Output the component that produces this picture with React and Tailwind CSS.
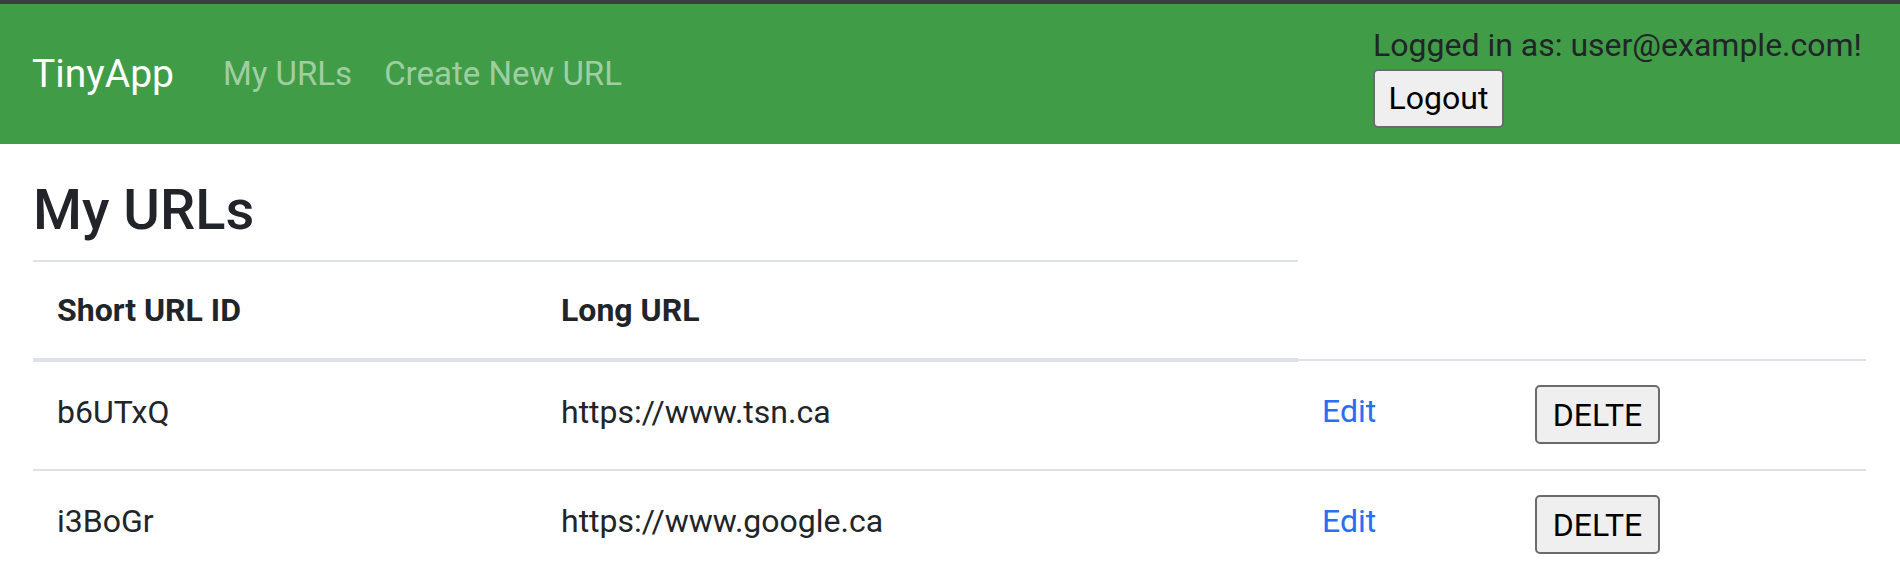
const urls = [
  { id: 'b6UTxQ', long: 'https://www.tsn.ca' },
  { id: 'i3BoGr', long: 'https://www.google.ca' },
];

function Header() {
  return (
    <nav className="bg-[#409c46] h-[140px] px-[32px] flex items-center justify-between">
      <div className="flex items-center">
        <span className="text-[39px] leading-[60px] text-white mr-[33px]">TinyApp</span>
        <a className="text-[33px] leading-[48px] text-[#a0cea3] px-[16px]">My URLs</a>
        <a className="text-[33px] leading-[48px] text-[#a0cea3] px-[16px]">Create New URL</a>
      </div>
      <div className="w-[495px] flex flex-col items-start">
        <span className="text-[32px] leading-[48px] text-[#212529]">Logged in as: user@example.com!</span>
        <button className="h-[59px] w-[131px] bg-[#efefef] border-2 border-[#6b6b6b] rounded-[5px] text-[32px] text-black">
          Logout
        </button>
      </div>
    </nav>
  );
}

export default function App() {
  return (
    <div className="min-h-[574px] bg-white font-['Roboto',sans-serif] text-[#212529]">
      <div className="h-[4px] bg-[#3a3d41]" />
      <Header />
      <main className="px-[33px]">
        <h1 className="text-[56px] font-medium leading-[67px] mt-[33px] mb-[16px]">My URLs</h1>
        <table className="w-[1833px] border-collapse text-[32px] leading-[48px]">
          <thead>
            <tr>
              <th className="w-[504px] text-left font-bold px-[24px] py-[24px] border-t-2 border-b-4 border-[#dee2e6]">
                Short URL ID
              </th>
              <th className="w-[761px] text-left font-bold px-[24px] py-[24px] border-t-2 border-b-4 border-[#dee2e6]">
                Long URL
              </th>
            </tr>
          </thead>
          <tbody>
            {urls.map((u) => (
              <tr key={u.id} className="h-[110px]">
                <td className="align-top px-[24px] pt-[26px] border-t-2 border-[#dee2e6]">{u.id}</td>
                <td className="align-top px-[24px] pt-[26px] border-t-2 border-[#dee2e6]">{u.long}</td>
                <td className="w-[213px] align-top px-[24px] pt-[26px] border-t-2 border-[#dee2e6]">
                  <a className="text-[#2a6ef5]">Edit</a>
                </td>
                <td className="align-top px-[24px] pt-[24px] border-t-2 border-[#dee2e6]">
                  <button className="block h-[59px] w-[125px] bg-[#efefef] border-2 border-[#6b6b6b] rounded-[5px] text-[32px] text-black">
                    DELTE
                  </button>
                </td>
              </tr>
            ))}
          </tbody>
        </table>
      </main>
    </div>
  );
}
